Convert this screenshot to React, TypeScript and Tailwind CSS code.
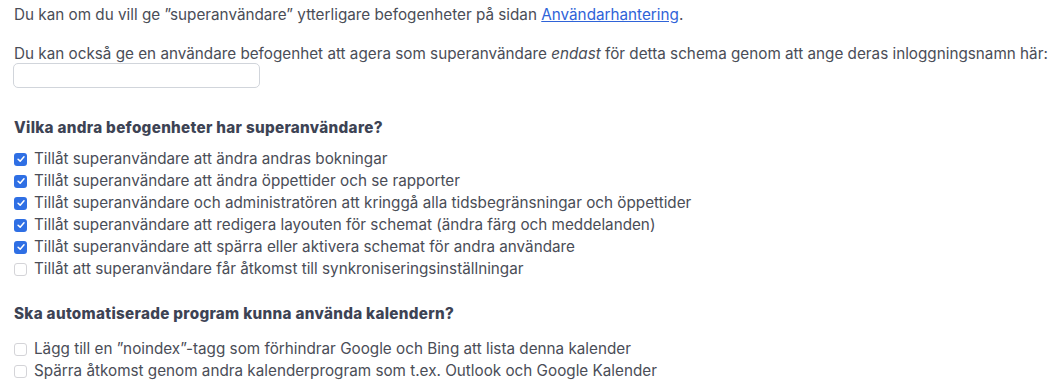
const superPerms = [
  { label: 'Tillåt superanvändare att ändra andras bokningar', checked: true },
  { label: 'Tillåt superanvändare att ändra öppettider och se rapporter', checked: true },
  { label: 'Tillåt superanvändare och administratören att kringgå alla tidsbegränsningar och öppettider', checked: true },
  { label: 'Tillåt superanvändare att redigera layouten för schemat (ändra färg och meddelanden)', checked: true },
  { label: 'Tillåt superanvändare att spärra eller aktivera schemat för andra användare', checked: true },
  { label: 'Tillåt att superanvändare får åtkomst till synkroniseringsinställningar', checked: false },
];

const botPerms = [
  { label: 'Lägg till en ”noindex”-tagg som förhindrar Google och Bing att lista denna kalender', checked: false },
  { label: 'Spärra åtkomst genom andra kalenderprogram som t.ex. Outlook och Google Kalender', checked: false },
];

function Box({ checked }: { checked: boolean }) {
  if (checked) {
    return (
      <span className="inline-flex h-[13px] w-[13px] shrink-0 items-center justify-center rounded-[3px] bg-[#2f6fe4]">
        <svg viewBox="0 0 12 12" className="h-[10px] w-[10px]" fill="none">
          <path d="M2.5 6.3 L5 8.6 L9.6 3.4" stroke="white" strokeWidth="1.8" strokeLinecap="round" strokeLinejoin="round" />
        </svg>
      </span>
    );
  }
  return <span className="inline-block h-[13px] w-[13px] shrink-0 rounded-[3px] border border-[#d4d4d8] bg-white" />;
}

function Option({ label, checked }: { label: string; checked: boolean }) {
  return (
    <label className="flex h-[22px] items-center gap-[7px]">
      <Box checked={checked} />
      <span>{label}</span>
    </label>
  );
}

export default function App() {
  return (
    <div
      className="min-h-[387px] whitespace-nowrap bg-white pl-[14px] pt-[3px] text-[15.25px] leading-[24px] text-[#4a4d57]"
      style={{ fontFamily: 'Inter, "Noto Sans", sans-serif' }}
    >
      <p>
        Du kan om du vill ge ”superanvändare” ytterligare befogenheter på sidan{' '}
        <a href="#" className="text-[#2f63d8] underline">Användarhantering</a>.
      </p>

      <p className="mt-[15px]">
        Du kan också ge en användare befogenhet att agera som superanvändare <em>endast</em> för detta schema genom att ange deras inloggningsnamn här:
      </p>
      <input
        type="text"
        className="-ml-px -mt-[3px] block h-[25px] w-[247px] rounded-[5px] border border-[#d1d5db] bg-white"
      />

      <h3 className="mt-[28px] font-extrabold tracking-[0.3px] text-[#3d4354]">Vilka andra befogenheter har superanvändare?</h3>
      <div className="mt-[8px]">
        {superPerms.map((p) => (
          <Option key={p.label} {...p} />
        ))}
      </div>

      <h3 className="mt-[22px] font-extrabold tracking-[0.3px] text-[#3d4354]">Ska automatiserade program kunna använda kalendern?</h3>
      <div className="mt-[12px]">
        {botPerms.map((p) => (
          <Option key={p.label} {...p} />
        ))}
      </div>
    </div>
  );
}
